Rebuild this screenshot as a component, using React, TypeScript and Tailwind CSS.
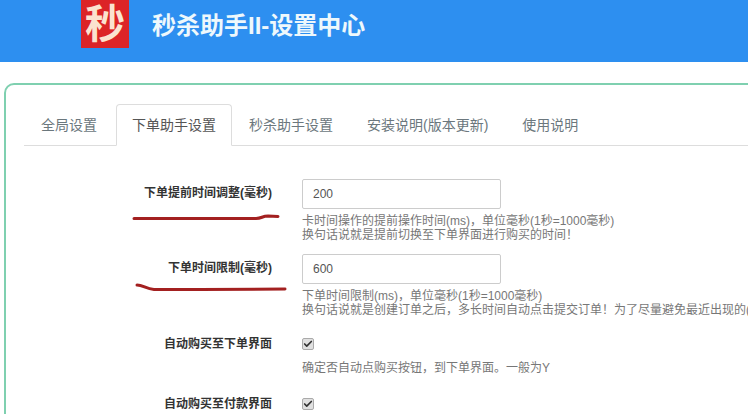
import { Check } from "lucide-react"

const tabs = ["全局设置", "下单助手设置", "秒杀助手设置", "安装说明(版本更新)", "使用说明"]

function Field({ label, value, className, lines }: { label: string; value: string; className: string; lines: string[] }) {
  return (
    <div className={"flex " + className}>
      <label className="w-[240px] h-[30px] shrink-0 text-right text-xs font-bold text-[#333] leading-[28px]">{label}</label>
      <div className="ml-[30px]">
        <div className="w-[199px] h-[30px] border border-[#ccc] rounded-[2px] pl-[10px] text-xs leading-[28px] text-[#555]">{value}</div>
        <div className="mt-[5px] text-xs leading-[14px] text-[#777] whitespace-nowrap">
          {lines.map((l) => (
            <div key={l}>{l}</div>
          ))}
        </div>
      </div>
    </div>
  )
}

function CheckRow({ label, help, className }: { label: string; help?: string; className: string }) {
  return (
    <div className={"flex " + className}>
      <label className="w-[240px] shrink-0 text-right text-xs font-bold text-[#333] leading-[16px]">{label}</label>
      <div className="ml-[30px]">
        <div className="w-[12px] h-[12px] mt-[2px] rounded-[2px] border border-[#aaa] bg-[#e0e0e0] flex items-center justify-center">
          <Check size={10} strokeWidth={4} className="text-[#333]" />
        </div>
        {help && <div className="mt-[11px] text-xs leading-[14px] text-[#777] whitespace-nowrap">{help}</div>}
      </div>
    </div>
  )
}

export default function App() {
  return (
    <div className="relative w-[748px] h-[414px] overflow-hidden bg-white font-['Liberation_Sans','Noto_Sans_CJK_SC',sans-serif]">
      <header className="h-[62px] bg-[#2d8ff0] flex items-start pl-[81px]">
        <div className="w-[48px] h-[48px] bg-[#dc2427] flex items-center justify-center text-[40px] leading-none font-bold text-[#fbe3d0]">秒</div>
        <h1 className="ml-[23px] mt-[9px] text-2xl leading-[34px] font-bold text-[#eef8fc] whitespace-nowrap">秒杀助手II-设置中心</h1>
      </header>

      <main className="pt-[21px] pl-[4px]">
        <div className="w-[800px] h-[400px] border-2 border-[#7fd0b0] rounded-[10px] pt-[19px] pl-[18px]">
          <nav className="flex gap-[2px] border-b border-[#ddd] pl-[1px]">
            {tabs.map((t, i) => (
              <div
                key={t}
                className={
                  i === 1
                    ? "h-[42px] -mb-px ml-[1px] -mr-[1px] px-[15px] border border-[#ddd] border-b-white rounded-t-[4px] bg-white text-sm leading-[40px] text-[#555] whitespace-nowrap"
                    : "h-[41px] px-[15px] border border-transparent text-sm leading-[40px] text-[#6b777d] whitespace-nowrap"
                }
              >
                {t}
              </div>
            ))}
          </nav>

          <form className="pl-[8px]">
            <Field
              className="mt-[33px]"
              label="下单提前时间调整(毫秒)"
              value="200"
              lines={["卡时间操作的提前操作时间(ms)，单位毫秒(1秒=1000毫秒)", "换句话说就是提前切换至下单界面进行购买的时间！"]}
            />
            <Field
              className="mt-[12px]"
              label="下单时间限制(毫秒)"
              value="600"
              lines={["下单时间限制(ms)，单位毫秒(1秒=1000毫秒)", "换句话说就是创建订单之后，多长时间自动点击提交订单！为了尽量避免最近出现的("]}
            />
            <CheckRow className="mt-[19px]" label="自动购买至下单界面" help="确定否自动点购买按钮，到下单界面。一般为Y" />
            <CheckRow className="mt-[21px]" label="自动购买至付款界面" />
          </form>
        </div>
      </main>

      {/* hand drawn red underlines on top of the screenshot */}
      <svg className="absolute inset-0 pointer-events-none" width="748" height="414" fill="none" stroke="#a32020" strokeWidth="3" strokeLinecap="round">
        <path d="M134 218.500 L256 218.500 C262 218.500 262 216 268 216 L278 216.500" />
        <path d="M137 285 C143 285 146 289 154 289.500 L200 289.500 L285 289" />
      </svg>
    </div>
  )
}
